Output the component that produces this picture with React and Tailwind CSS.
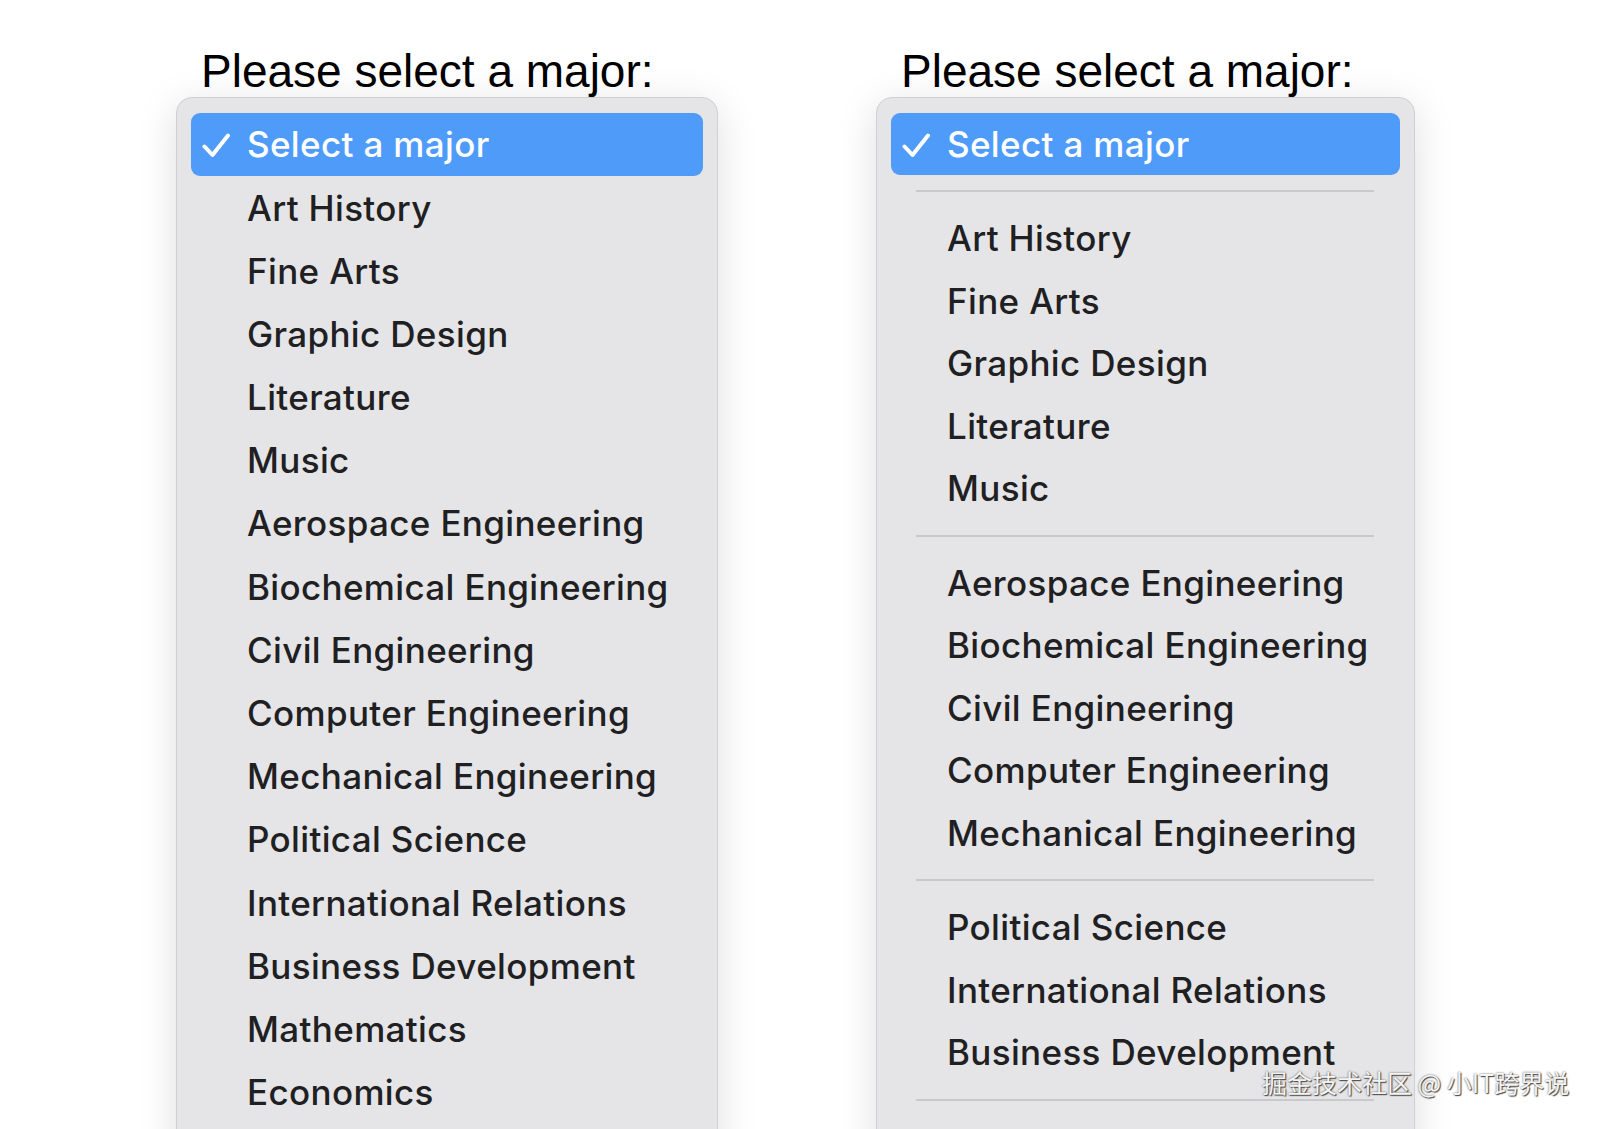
import React from "react";

const leftItems = [
  "Art History",
  "Fine Arts",
  "Graphic Design",
  "Literature",
  "Music",
  "Aerospace Engineering",
  "Biochemical Engineering",
  "Civil Engineering",
  "Computer Engineering",
  "Mechanical Engineering",
  "Political Science",
  "International Relations",
  "Business Development",
  "Mathematics",
  "Economics",
];

// the right-hand menu splits the list with separators (the rest is below the fold)
const rightGroups = [
  ["Art History", "Fine Arts", "Graphic Design", "Literature", "Music"],
  [
    "Aerospace Engineering",
    "Biochemical Engineering",
    "Civil Engineering",
    "Computer Engineering",
    "Mechanical Engineering",
  ],
  ["Political Science", "International Relations", "Business Development"],
];

const itemFont = { fontFamily: "Inter, 'Liberation Sans', sans-serif" };

function Check() {
  return (
    <svg width="29" height="25" viewBox="0 0 29 25" className="-translate-x-[1px] translate-y-[1px]">
      <path
        d="M2.5 13.5 L10.5 22 L26 2.5"
        fill="none"
        stroke="white"
        strokeWidth="4"
        strokeLinecap="round"
        strokeLinejoin="round"
      />
    </svg>
  );
}

function SelectedRow({ rowClass }) {
  return (
    <div className={`flex items-center rounded-[9px] bg-[#4f9bf9] pl-[12px] text-white ${rowClass}`}>
      <span className="flex w-[44px] items-center">
        <Check />
      </span>
      <span className="text-[35px] font-medium tracking-[0.01em]" style={itemFont}>
        Select a major
      </span>
    </div>
  );
}

function Row({ label, rowClass }) {
  return (
    <div className={`flex shrink-0 items-center pl-[56px] text-[#202022] ${rowClass}`}>
      <span className="text-[35px] font-medium tracking-[0.01em]" style={itemFont}>
        {label}
      </span>
    </div>
  );
}

function Separator() {
  return (
    <div className="flex h-[32px] shrink-0 items-center pl-[25px] pr-[26px]">
      <div className="h-[2px] w-full bg-[#c9c9cc]" />
    </div>
  );
}

function Title() {
  return (
    <h2
      className="pl-[25px] text-[46px] leading-none text-black"
      style={{ fontFamily: "'Liberation Sans', Arial, sans-serif" }}
    >
      Please select a major:
    </h2>
  );
}

function Panel({ children, width }) {
  return (
    <div
      className={`mt-[3px] flex flex-col rounded-[16px] border border-[#d0d0d3] bg-[#e5e5e7] px-[14px] pt-[15px] pb-[80px] shadow-[0_8px_40px_rgba(0,0,0,0.13)] ${width}`}
    >
      {children}
    </div>
  );
}

export default function App() {
  return (
    <div className="relative h-[1129px] w-[1600px] overflow-hidden bg-white">
      <div className="flex gap-[158px] pl-[176px] pt-[48px]">
        <div className="flex flex-col">
          <Title />
          <Panel width="w-[542px]">
            <SelectedRow rowClass="h-[63.2px]" />
            {leftItems.map((m) => (
              <Row key={m} label={m} rowClass="h-[63.2px]" />
            ))}
          </Panel>
        </div>

        <div className="flex flex-col">
          <Title />
          <Panel width="w-[539px]">
            <SelectedRow rowClass="h-[62px]" />
            {rightGroups.map((g, i) => (
              <React.Fragment key={i}>
                <Separator />
                {g.map((m) => (
                  <Row key={m} label={m} rowClass="h-[62.5px]" />
                ))}
              </React.Fragment>
            ))}
            <Separator />
          </Panel>
        </div>
      </div>

      <div
        className="absolute left-[1262px] top-[1070px] text-[25px] leading-none text-[#f4f4f4] [text-shadow:0_0_2px_#555,1px_1px_1px_#444]"
        style={{ fontFamily: "'Noto Sans CJK SC', 'Liberation Sans', sans-serif" }}
      >
        掘金技术社区 @ 小IT跨界说
      </div>
    </div>
  );
}
